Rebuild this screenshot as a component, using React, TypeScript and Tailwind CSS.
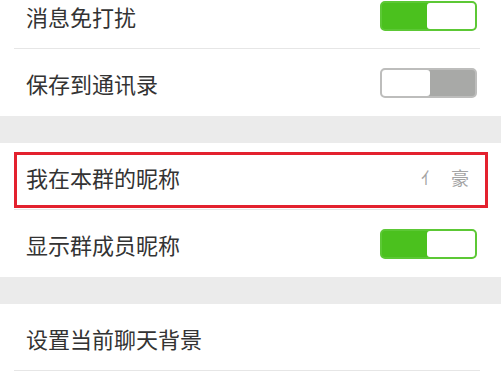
import React from "react";

function Toggle({ on }: { on: boolean }) {
  if (on) {
    return (
      <div className="flex h-[30px] w-[97px] rounded-[5px] border-2 border-[#5cc835] bg-[#4bc11e]">
        <div className="flex-1" />
        <div className="w-[48px] rounded-[3px] bg-white" />
      </div>
    );
  }
  return (
    <div className="flex h-[30px] w-[97px] rounded-[5px] border-2 border-[#bdbdbc] bg-[#a8a9a7]">
      <div className="w-[48px] rounded-[3px] bg-white" />
      <div className="flex-1" />
    </div>
  );
}

function Row({
  label,
  right,
  divider = true,
}: {
  label: string;
  right?: React.ReactNode;
  divider?: boolean;
}) {
  return (
    <div className="relative h-[67px] bg-white">
      <div className="flex h-full items-center justify-between pl-[26px] pr-[24px]">
        <span className="text-[22px] leading-none text-[#333333]">{label}</span>
        {right}
      </div>
      {divider && (
        <div className="absolute bottom-0 left-[14px] right-[21px] h-px bg-[#e6e6e6]" />
      )}
    </div>
  );
}

export default function App() {
  return (
    <div
      className="h-[388px] w-[501px] overflow-hidden bg-white"
      style={{ fontFamily: '"Noto Sans CJK SC", "Noto Sans", sans-serif' }}
    >
      <div className="-mt-[18px]">
        <Row label="消息免打扰" right={<Toggle on />} />
        <Row label="保存到通讯录" right={<Toggle on={false} />} divider={false} />

        <div className="h-[27px] bg-[#ebebeb]" />

        <div className="relative">
          <Row
            label="我在本群的昵称"
            right={
              <span className="flex items-center gap-[14px] pr-[8px] text-[18px] leading-none text-[#a3a3a3]">
                <span className="text-[16px]">亻</span>
                <span>豪</span>
              </span>
            }
          />
          <div className="absolute left-[14px] top-[9px] h-[56px] w-[474px] border-[3px] border-[#e3212e]" />
        </div>

        <Row label="显示群成员昵称" right={<Toggle on />} divider={false} />

        <div className="h-[27px] bg-[#ebebeb]" />

        <Row label="设置当前聊天背景" />
      </div>
    </div>
  );
}
